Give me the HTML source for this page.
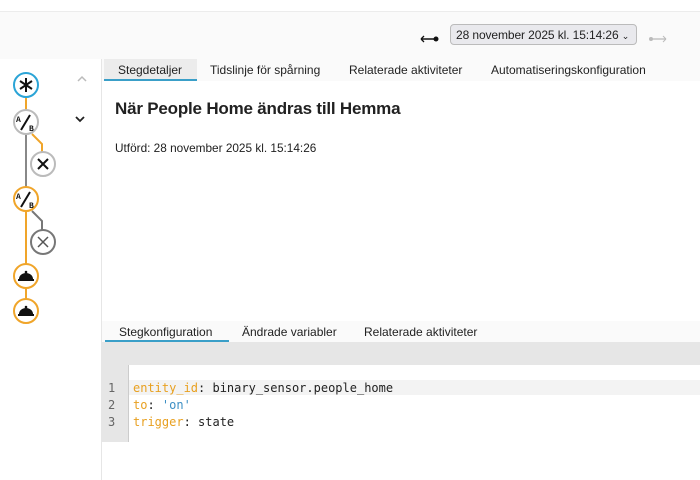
<!DOCTYPE html>
<html><head><meta charset="utf-8"><style>
*{margin:0;padding:0;box-sizing:border-box}
body{width:700px;height:480px;overflow:hidden;background:#fff;font-family:"Liberation Sans",sans-serif;color:#212121;position:relative}
.abs{position:absolute}
.top{left:0;top:11px;width:700px;height:48px;background:#fafafa;border-top:1px solid #ececec}
.sel{left:450px;top:24px;width:187px;height:21px;border:1px solid #bbb;border-radius:4px;background:#e9e9ed;font-size:12px;padding:3px 5px;color:#222;white-space:nowrap;letter-spacing:-0.1px}
.tabs{left:102px;top:59px;width:598px;height:22px;background:#fafafa;font-size:12px}
.tab{position:absolute;top:4px;color:#222}
.act{position:absolute;left:2px;top:0;width:93px;height:22px;background:#ececec;border-bottom:2px solid #3a9fc8}
.mono{font-family:"DejaVu Sans Mono","Liberation Mono",monospace;font-size:12px}
.or{color:#e8a020}.bl{color:#3d8fc4}
</style></head><body>
<div class="abs top"></div>
<div class="abs" style="left:420px;top:30px;width:20px;height:8px">
<svg width="20" height="8"><line x1="1" y1="4" x2="17" y2="4" stroke="#111" stroke-width="1.5"/><circle cx="16" cy="4" r="2.5" fill="#111"/><path d="M1 4 l3-3 M1 4 l3 3" stroke="#111" stroke-width="1.3"/></svg></div>
<div class="abs sel">28 november 2025 kl. 15:14:26 <span style="font-size:9px">&#8964;</span></div>
<div class="abs" style="left:648px;top:30px"><svg width="20" height="8"><line x1="2" y1="4" x2="18" y2="4" stroke="#bbb" stroke-width="1.3"/><circle cx="3" cy="4" r="2" fill="#bbb"/><path d="M18 4 l-3-3 M18 4 l-3 3" stroke="#bbb"/></svg></div>

<div class="abs" style="left:101px;top:59px;width:1px;height:421px;background:#e6e6e6"></div>
<div class="abs tabs"><div class="act"></div>
<span class="tab" style="left:16px">Stegdetaljer</span>
<span class="tab" style="left:108px">Tidslinje för spårning</span>
<span class="tab" style="left:247px">Relaterade aktiviteter</span>
<span class="tab" style="left:389px">Automatiseringskonfiguration</span></div>
<div class="abs" style="left:115px;top:99px;font-size:17px;font-weight:bold;letter-spacing:-0.2px">När People Home ändras till Hemma</div>
<div class="abs" style="left:115px;top:141px;font-size:11.8px">Utförd: 28 november 2025 kl. 15:14:26</div>

<div class="abs" style="left:102px;top:321px;width:598px;height:21px;background:#fafafa;font-size:12px">
<div class="abs" style="left:3px;top:0;width:124px;height:21px;border-bottom:2px solid #3a9fc8"></div>
<span class="abs" style="left:17px;top:4px">Stegkonfiguration</span>
<span class="abs" style="left:140px;top:4px">Ändrade variabler</span>
<span class="abs" style="left:262px;top:4px">Relaterade aktiviteter</span></div>
<div class="abs" style="left:102px;top:342px;width:598px;height:100px;background:#e6e6e6"></div>
<div class="abs" style="left:128px;top:365px;width:572px;height:77px;background:#fff;border-left:1px solid #ccc"></div>
<div class="abs" style="left:129px;top:380px;width:571px;height:15px;background:#f3f3f3"></div>
<div class="abs mono" style="left:108px;top:380px;line-height:17px;color:#666">1<br>2<br>3</div>
<div class="abs mono" style="left:133px;top:380px;line-height:17px;color:#222"><span class="or">entity_id</span>: binary_sensor.people_home<br><span class="or">to</span>: <span class="bl">'on'</span><br><span class="or">trigger</span>: state</div>

<svg class="abs" style="left:0;top:60px" width="100" height="270">
<g fill="none" stroke-width="2">
<line x1="26" y1="37" x2="26" y2="50" stroke="#f0a52a"/>
<line x1="26" y1="75" x2="26" y2="127" stroke="#888"/>
<path d="M32 74 L42 84 L42 92" stroke="#f0a52a"/>
<line x1="26" y1="151" x2="26" y2="204" stroke="#f0a52a"/>
<path d="M32 151 L42 161 L42 170" stroke="#777"/>
<line x1="26" y1="228" x2="26" y2="240" stroke="#f0a52a"/>
<circle cx="26" cy="25" r="12" stroke="#2ba4d6" fill="#fff"/>
<circle cx="26" cy="62" r="12" stroke="#bbb" fill="#fff"/>
<circle cx="43" cy="104" r="12" stroke="#bbb" fill="#fff"/>
<circle cx="26" cy="139" r="12" stroke="#f0a52a" fill="#fff"/>
<circle cx="43" cy="182" r="12" stroke="#777" fill="#fff"/>
<circle cx="26" cy="216" r="12" stroke="#f0a52a" fill="#fff"/>
<circle cx="26" cy="251" r="12" stroke="#f0a52a" fill="#fff"/>
<path d="M26 18v14M20 21l12 8M32 21l-12 8" stroke="#111"/>
<path d="M38 99l10 10M48 99l-10 10" stroke="#111"/>
<path d="M38 177l10 10M48 177l-10 10" stroke="#555" stroke-width="1.5"/>
<path d="M21 70L30 55M21 147L30 132" stroke="#111"/>
<path d="M18 220h16M18 255h16" stroke="#111"/>
<path d="M78 21l4-4 4 4" stroke="#bbb" stroke-width="1.5"/>
<path d="M76 57l4 4 4-4" stroke="#222" stroke-width="1.8"/>
</g>
<g fill="#111" font-size="8" font-weight="bold" font-family="Liberation Mono,monospace">
<text x="16" y="62">A</text><text x="29" y="71">B</text>
<text x="16" y="139">A</text><text x="29" y="148">B</text></g>
<path d="M19 219a7 6 0 0 1 14 0z M19 254a7 6 0 0 1 14 0z" fill="#111"/>
<circle cx="26" cy="212" r="1.3" fill="#111"/><circle cx="26" cy="247" r="1.3" fill="#111"/>
</svg>
</body></html>
